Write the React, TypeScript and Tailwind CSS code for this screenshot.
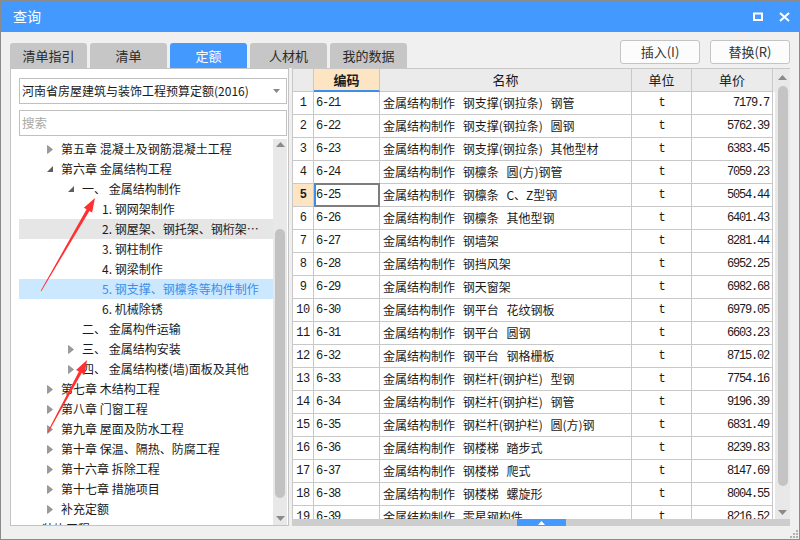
import React from "react";

type TreeNode = { text: string; level: 0 | 1 | 2 | 3; arrow?: "open" | "closed"; state?: "hover" | "selected" };

const tree: TreeNode[] = [
  { text: "第五章 混凝土及钢筋混凝土工程", level: 1, arrow: "closed" },
  { text: "第六章 金属结构工程", level: 1, arrow: "open" },
  { text: "一、 金属结构制作", level: 2, arrow: "open" },
  { text: "1. 钢网架制作", level: 3 },
  { text: "2. 钢屋架、钢托架、钢桁架、钢架桥制作", level: 3, state: "hover" },
  { text: "3. 钢柱制作", level: 3 },
  { text: "4. 钢梁制作", level: 3 },
  { text: "5. 钢支撑、钢檩条等构件制作", level: 3, state: "selected" },
  { text: "6. 机械除锈", level: 3 },
  { text: "二、 金属构件运输", level: 2 },
  { text: "三、 金属结构安装", level: 2, arrow: "closed" },
  { text: "四、 金属结构楼(墙)面板及其他", level: 2, arrow: "closed" },
  { text: "第七章 木结构工程", level: 1, arrow: "closed" },
  { text: "第八章 门窗工程", level: 1, arrow: "closed" },
  { text: "第九章 屋面及防水工程", level: 1, arrow: "closed" },
  { text: "第十章 保温、隔热、防腐工程", level: 1, arrow: "closed" },
  { text: "第十六章 拆除工程", level: 1, arrow: "closed" },
  { text: "第十七章 措施项目", level: 1, arrow: "closed" },
  { text: "补充定额", level: 1, arrow: "closed" },
  { text: "装饰工程", level: 0 },
];

const rows: [string, string, string][] = [
  ["6-21", "金属结构制作 钢支撑(钢拉条) 钢管", "7179.7"],
  ["6-22", "金属结构制作 钢支撑(钢拉条) 圆钢", "5762.39"],
  ["6-23", "金属结构制作 钢支撑(钢拉条) 其他型材", "6383.45"],
  ["6-24", "金属结构制作 钢檩条 圆(方)钢管", "7059.23"],
  ["6-25", "金属结构制作 钢檩条 C、Z型钢", "5054.44"],
  ["6-26", "金属结构制作 钢檩条 其他型钢", "6401.43"],
  ["6-27", "金属结构制作 钢墙架", "8281.44"],
  ["6-28", "金属结构制作 钢挡风架", "6952.25"],
  ["6-29", "金属结构制作 钢天窗架", "6982.68"],
  ["6-30", "金属结构制作 钢平台 花纹钢板", "6979.05"],
  ["6-31", "金属结构制作 钢平台 圆钢", "6603.23"],
  ["6-32", "金属结构制作 钢平台 钢格栅板", "8715.02"],
  ["6-33", "金属结构制作 钢栏杆(钢护栏) 型钢", "7754.16"],
  ["6-34", "金属结构制作 钢栏杆(钢护栏) 钢管", "9196.39"],
  ["6-35", "金属结构制作 钢栏杆(钢护栏) 圆(方)钢", "6831.49"],
  ["6-36", "金属结构制作 钢楼梯 踏步式", "8239.83"],
  ["6-37", "金属结构制作 钢楼梯 爬式", "8147.69"],
  ["6-38", "金属结构制作 钢楼梯 螺旋形", "8004.55"],
  ["6-39", "金属结构制作 零星钢构件", "8216.52"],
];

const tabs = ["清单指引", "清单", "定额", "人材机", "我的数据"];

const levelPad = { 0: "pl-[23px]", 1: "pl-[28px]", 2: "pl-[49px]", 3: "pl-[83px]" } as const;

function TreeArrow({ kind }: { kind?: "open" | "closed" }) {
  if (!kind) return null;
  return (
    <span className="w-[14px] shrink-0 flex items-center">
      {kind === "closed" ? (
        <svg width="6" height="9" viewBox="0 0 6 9"><path d="M0.5 0.5 L5.5 4.5 L0.5 8.5 Z" fill="#9a9a9a" stroke="#7c7c7c" strokeWidth="0.6" /></svg>
      ) : (
        <svg width="6" height="6" viewBox="0 0 6 6"><path d="M6 0 L6 6 L0 6 Z" fill="#5e5e5e" /></svg>
      )}
    </span>
  );
}

function arrowPoints(x1: number, y1: number, x2: number, y2: number) {
  const dx = x2 - x1, dy = y2 - y1;
  const len = Math.hypot(dx, dy);
  const ux = dx / len, uy = dy / len;
  const nx = -uy, ny = ux;
  const bx = x2 - ux * 14, by = y2 - uy * 14;
  const p = (x: number, y: number, w: number) => `${(x + nx * w).toFixed(1)},${(y + ny * w).toFixed(1)}`;
  return [p(x1, y1, 0.4), p(bx, by, 1.6), p(bx, by, 4.8), `${x2},${y2}`, p(bx, by, -4.8), p(bx, by, -1.6), p(x1, y1, -0.4)].join(" ");
}

const mono = "font-['Liberation_Mono',monospace] text-[12px] tracking-[-1.2px]";

export default function App() {
  return (
    <div className="relative w-[800px] h-[540px] overflow-hidden bg-[#f0f0f0] border border-[#8c8c8c] flex flex-col font-['Microsoft_YaHei','Noto_Sans_CJK_SC',sans-serif] text-[12px] text-[#1a1a1a]">
      {/* title bar */}
      <div className="h-[31px] shrink-0 bg-[#4499ff] flex items-center pl-[12px] pr-[9px] text-white text-[14px]">
        <span>查询</span>
        <div className="ml-auto flex items-center gap-[16px]">
          <svg width="10" height="9" viewBox="0 0 10 9"><rect x="1" y="1.5" width="8" height="6.5" fill="none" stroke="#fff" strokeWidth="2" /></svg>
          <svg width="11" height="10" viewBox="0 0 11 10"><path d="M1 1 L10 9 M10 1 L1 9" stroke="#fff" strokeWidth="2" /></svg>
        </div>
      </div>

      {/* tabs + buttons */}
      <div className="h-[36px] shrink-0 flex">
        <div className="self-end flex gap-[3px] pl-[9px]">
          {tabs.map((t) => (
            <div key={t} className={`w-[77px] h-[25px] rounded-t-[3px] flex items-center justify-center text-[13px] ${t === "定额" ? "bg-[#4499ff] text-white" : "bg-[#c6c6c6] text-[#2a2a2a]"}`}>{t}</div>
          ))}
        </div>
        <div className="ml-auto mt-[8px] flex gap-[10px] pr-[9px]">
          {["插入(I)", "替换(R)"].map((b) => (
            <div key={b} className="w-[80px] h-[24px] rounded-[3px] border border-[#c4c4c4] bg-[#fcfcfc] flex items-center justify-center text-[13px] text-[#333]">{b}</div>
          ))}
        </div>
      </div>

      {/* main */}
      <div className="h-[458px] shrink-0 flex">
        {/* left panel */}
        <div className="ml-[9px] w-[279px] bg-white border border-[#c4c4c4] flex flex-col">
          <div className="ml-[8px] mr-[1px] mt-[9px] h-[26px] border border-[#c0c0c0] flex items-center pl-[2px] pr-[6px]">
            <span className="text-[12px]">河南省房屋建筑与装饰工程预算定额(2016)</span>
            <svg className="ml-auto" width="7" height="4" viewBox="0 0 7 4"><path d="M0 0 L7 0 L3.5 4 Z" fill="#888" /></svg>
          </div>
          <div className="ml-[8px] mr-[1px] mt-[6px] h-[26px] border border-[#c0c0c0] flex items-center pl-[2px] text-[#a8a8a8] text-[12.5px]">搜索</div>
          <div className="mt-[3px] ml-[8px] mr-[1px] flex-1 min-h-0 flex">
            <div className="flex-1 min-w-0 overflow-hidden">
              {tree.map((n) => (
                <div key={n.text} className={`h-[20px] flex items-center ${levelPad[n.level]} ${n.state === "hover" ? "bg-[#e6e6e6]" : ""} ${n.state === "selected" ? "bg-[#cce8ff] text-[#3d8ee8]" : ""}`}>
                  <TreeArrow kind={n.arrow} />
                  <span className={`truncate pr-[14px] ${n.level === 2 && !n.arrow ? "pl-[14px]" : ""}`}>{n.text}</span>
                </div>
              ))}
            </div>
            <div className="w-[14px] shrink-0 bg-[#e8e8e8] flex flex-col items-center">
              <svg className="mt-[3px]" width="9" height="5" viewBox="0 0 9 5"><path d="M0 5 L4.5 0 L9 5 Z" fill="#8a8a8a" /></svg>
              <div className="mt-[82px] w-[10px] h-[269px] rounded-full bg-[#c2c2c2]" />
              <svg className="mt-auto mb-[4px]" width="9" height="5" viewBox="0 0 9 5"><path d="M0 0 L9 0 L4.5 5 Z" fill="#8a8a8a" /></svg>
            </div>
          </div>
        </div>

        {/* right panel */}
        <div className="ml-[3px] w-[498px] flex flex-col">
          <div className="flex-1 min-h-0 flex border-l border-t border-[#c8c8c8] bg-white overflow-hidden">
            <div className="w-[482px] shrink-0">
              <div className="grid grid-cols-[21px_66px_252px_60px_81px] h-[23px] bg-[#ebebeb]">
                <div className="border-r border-b border-[#c8c8c8]" />
                <div className="border-r border-b-2 border-[#c8c8c8] border-b-[#3d8ee8] bg-[#fde4c2] flex items-center justify-center font-bold text-[13px]">编码</div>
                <div className="border-r border-b border-[#c8c8c8] flex items-center justify-center text-[13px]">名称</div>
                <div className="border-r border-b border-[#c8c8c8] flex items-center justify-center text-[13px]">单位</div>
                <div className="border-r border-b border-[#c8c8c8] flex items-center justify-center text-[13px]">单价</div>
              </div>
              {rows.map(([code, name, price], i) => {
                const sel = i === 4;
                return (
                  <div key={code} className="grid grid-cols-[21px_66px_252px_60px_81px] h-[23px]">
                    <div className={`border-r border-b border-[#c8c8c8] flex items-center justify-center font-['Liberation_Mono',monospace] text-[12px] tracking-[-0.5px] ${sel ? "bg-[#fde4c2] font-bold" : ""}`}>{i + 1}</div>
                    <div className={`relative border-r border-b border-[#c8c8c8] flex items-center pl-[2px] ${mono}`}>
                      {code}
                      {sel && <div className="absolute -top-px left-0 -right-px -bottom-px border-2 border-[#7d7d7d] border-l-[#3d8ee8]" />}
                    </div>
                    <div className="border-r border-b border-[#c8c8c8] flex items-center pl-[3px] whitespace-nowrap overflow-hidden text-[12px] [word-spacing:5px]">{name}</div>
                    <div className={`border-r border-b border-[#c8c8c8] flex items-center justify-center ${mono}`}>t</div>
                    <div className={`border-r border-b border-[#c8c8c8] flex items-center justify-end pr-[3px] ${mono}`}>{price}</div>
                  </div>
                );
              })}
            </div>
            <div className="w-[15px] shrink-0 ml-auto bg-[#e8e8e8] flex flex-col items-center">
              <svg className="mt-[6px]" width="9" height="5" viewBox="0 0 9 5"><path d="M0 5 L4.5 0 L9 5 Z" fill="#8a8a8a" /></svg>
              <div className="mt-[6px] w-[10px] h-[400px] rounded-full bg-[#c4c4c4]" />
              <svg className="mt-auto mb-[4px]" width="9" height="5" viewBox="0 0 9 5"><path d="M0 0 L9 0 L4.5 5 Z" fill="#8a8a8a" /></svg>
            </div>
          </div>
          <div className="h-[7px] shrink-0 bg-[#cdcdcd] flex justify-center">
            <div className="w-[49px] bg-[#4499ff] flex items-center justify-center">
              <svg width="7" height="4" viewBox="0 0 7 4"><path d="M0 4 L3.5 0 L7 4 Z" fill="#fff" /></svg>
            </div>
          </div>
        </div>
      </div>

      {/* resize grip */}
      <svg className="absolute right-[1px] bottom-[1px]" width="8" height="8" viewBox="0 0 8 8">
        {[[6, 0], [6, 3], [3, 3], [6, 6], [3, 6], [0, 6]].map(([x, y]) => (
          <rect key={`${x}-${y}`} x={x} y={y} width="2" height="2" fill="#b0b0b0" />
        ))}
      </svg>

      {/* red annotation arrows */}
      <svg className="absolute left-0 top-0 pointer-events-none" width="800" height="540">
        <polygon points={arrowPoints(40, 290, 94, 197)} fill="#ff3030" />
        <polygon points={arrowPoints(47, 431, 86, 359)} fill="#ff3030" />
      </svg>
    </div>
  );
}
